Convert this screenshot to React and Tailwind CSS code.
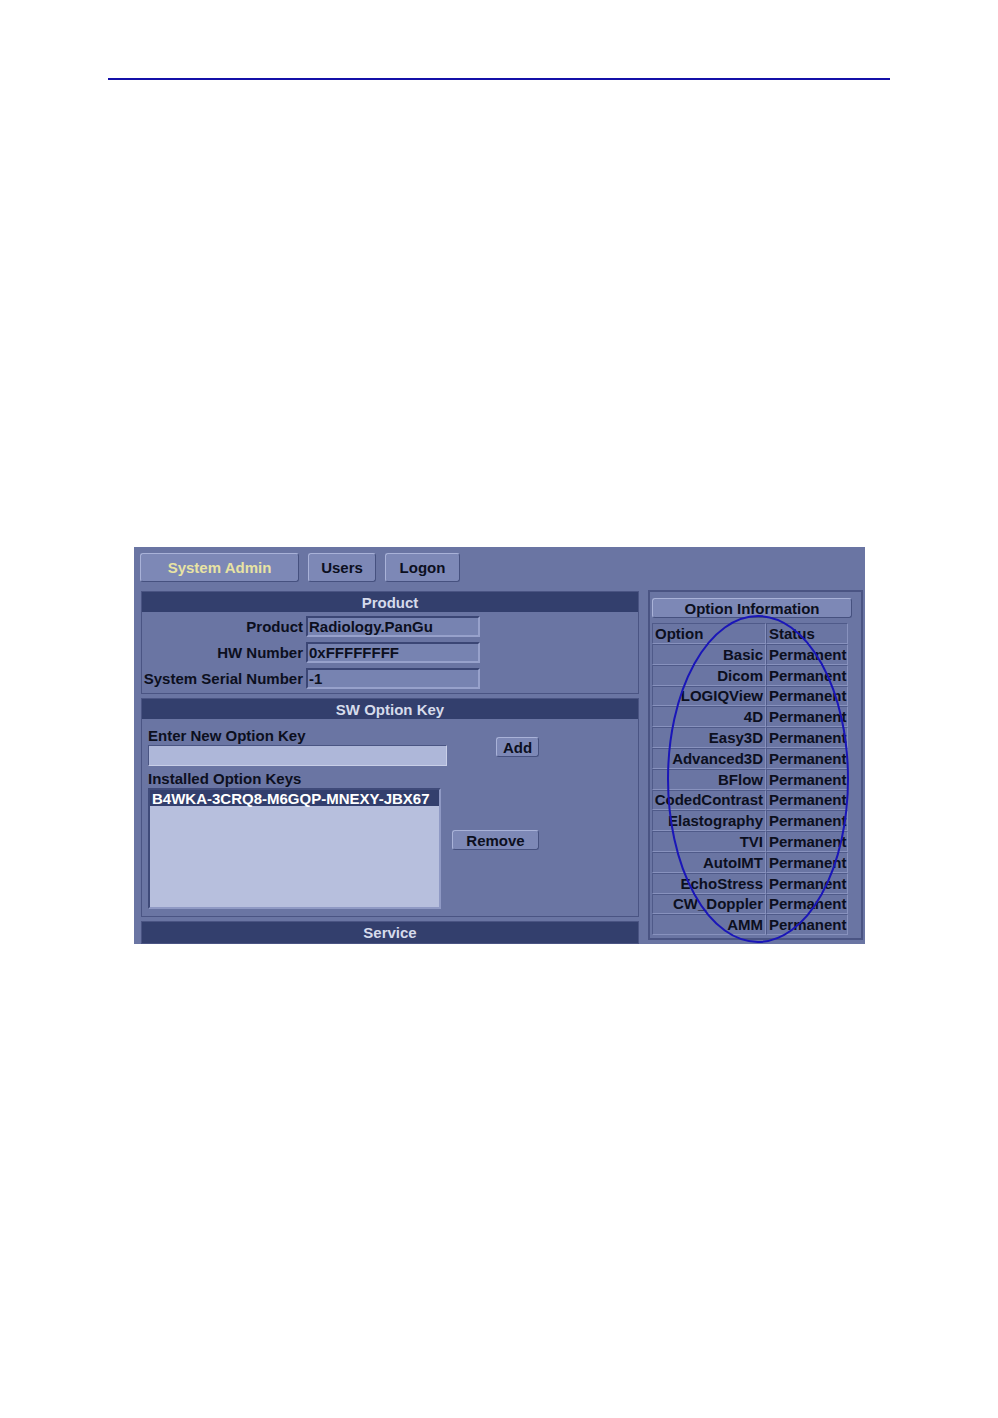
const options = [
  'Basic',
  'Dicom',
  'LOGIQView',
  '4D',
  'Easy3D',
  'Advanced3D',
  'BFlow',
  'CodedContrast',
  'Elastography',
  'TVI',
  'AutoIMT',
  'EchoStress',
  'CW_Doppler',
  'AMM',
];

const font = { fontFamily: '"Liberation Sans", Arial, sans-serif' };

function RaisedButton({ children, className = '' }) {
  return (
    <div
      className={`flex items-center justify-center rounded-[3px] border border-t-[#a9b2d8] border-l-[#a9b2d8] border-b-[#46517f] border-r-[#46517f] bg-[#7d88b6] font-bold text-[15px] leading-none text-[#0c0f1e] ${className}`}
    >
      {children}
    </div>
  );
}

function Field({ value }) {
  return (
    <div className="flex h-[21px] w-[174px] items-center border-2 border-t-[#3b4675] border-l-[#3b4675] border-b-[#97a1cb] border-r-[#97a1cb] bg-[#7783b1] pl-[1px] text-[15px] font-bold leading-none text-[#0c0f1e]">
      {value}
    </div>
  );
}

function SectionHeader({ children, className = '' }) {
  return (
    <div className={`flex h-[20px] items-center justify-center bg-[#333f6d] text-[15px] font-bold leading-none text-[#d6dbeb] ${className}`}>
      {children}
    </div>
  );
}

function Cell({ children, className = '' }) {
  return (
    <div
      className={`flex items-center border border-t-[#4f5a89] border-l-[#4f5a89] border-b-[#8892be] border-r-[#8892be] px-[2px] leading-none ${className}`}
    >
      {children}
    </div>
  );
}

export default function App() {
  return (
    <div className="relative h-[1418px] w-[998px] overflow-hidden bg-white" style={font}>
      <div className="ml-[108px] mt-[78px] h-[2px] w-[782px] bg-[#1410a8]" />

      <div className="relative ml-[134px] mt-[467px] h-[397px] w-[731px] overflow-hidden bg-[#6a75a3] pl-[6px] pt-[6px]">
        {/* tabs */}
        <div className="flex gap-[9px]">
          <RaisedButton className="h-[29px] w-[159px] text-[#e8e3a3]">System Admin</RaisedButton>
          <RaisedButton className="h-[29px] w-[68px]">Users</RaisedButton>
          <RaisedButton className="h-[29px] w-[75px]">Logon</RaisedButton>
        </div>

        <div className="mt-[8px] flex gap-[9px]">
          {/* left column */}
          <div className="flex w-[499px] flex-col gap-[4px] pl-[1px] pt-[1px]">
            <div className="border border-[#4a5483]">
              <SectionHeader>Product</SectionHeader>
              <div className="flex flex-col gap-[5px] pb-[4px] pt-[4px]">
                {[
                  ['Product', 'Radiology.PanGu'],
                  ['HW Number', '0xFFFFFFFF'],
                  ['System Serial Number', '-1'],
                ].map(([label, value]) => (
                  <div key={label} className="flex h-[21px] items-center gap-[3px]">
                    <div className="w-[161px] text-right text-[15px] font-bold leading-none text-[#0c0f1e]">{label}</div>
                    <Field value={value} />
                  </div>
                ))}
              </div>
            </div>

            <div className="border border-[#4a5483]">
              <SectionHeader>SW Option Key</SectionHeader>
              <div className="flex h-[197px] gap-[2px] pl-[6px] pt-[8px]">
                <div className="flex w-[300px] flex-col">
                  <div className="text-[15px] font-bold leading-[17px] text-[#0c0f1e]">Enter New Option Key</div>
                  <div className="mt-[1px] h-[21px] w-[299px] border border-t-[#4a5583] border-l-[#4a5583] border-b-[#c9cfe8] border-r-[#c9cfe8] bg-[#aeb7d9]" />
                  <div className="mt-[4px] text-[15px] font-bold leading-[17px] text-[#0c0f1e]">Installed Option Keys</div>
                  <div className="mt-[1px] h-[121px] w-[293px] border-2 border-t-[#3f4a79] border-l-[#3f4a79] border-b-[#8f99c4] border-r-[#8f99c4] bg-[#b7bfdd]">
                    <div className="flex h-[16px] items-center bg-[#333f6d] pl-[2px] text-[15px] font-bold leading-none text-white">
                      B4WKA-3CRQ8-M6GQP-MNEXY-JBX67
                    </div>
                  </div>
                </div>
                <div className="flex w-[89px] flex-col items-end">
                  <RaisedButton className="mt-[10px] h-[20px] w-[43px]">Add</RaisedButton>
                  <RaisedButton className="mt-[73px] h-[20px] w-[87px]">Remove</RaisedButton>
                </div>
              </div>
            </div>

            <div className="border border-[#4a5483]">
              <SectionHeader className="h-[21px]">Service</SectionHeader>
            </div>
          </div>

          {/* right column */}
          <div className="h-[350px] w-[215px] border-2 border-[#4a5483] px-[2px] pt-[6px]">
            <RaisedButton className="h-[20px] w-[200px]">Option Information</RaisedButton>
            <div className="mt-[5px] w-[196px] text-[15px] font-bold text-[#0c0f1e]">
              <div className="flex h-[21px]">
                <Cell className="w-[114px]">Option</Cell>
                <Cell className="w-[82px]">Status</Cell>
              </div>
              {options.map((name) => (
                <div key={name} className="flex h-[20.8px]">
                  <Cell className="w-[114px] justify-end">{name}</Cell>
                  <Cell className="w-[82px]">Permanent</Cell>
                </div>
              ))}
            </div>
          </div>
        </div>

        {/* hand-drawn annotation */}
        <svg className="pointer-events-none absolute left-0 top-0" width="731" height="397">
          <ellipse cx="624" cy="232" rx="90" ry="163" fill="none" stroke="#1a16b8" strokeWidth="2" />
        </svg>
      </div>
    </div>
  );
}
